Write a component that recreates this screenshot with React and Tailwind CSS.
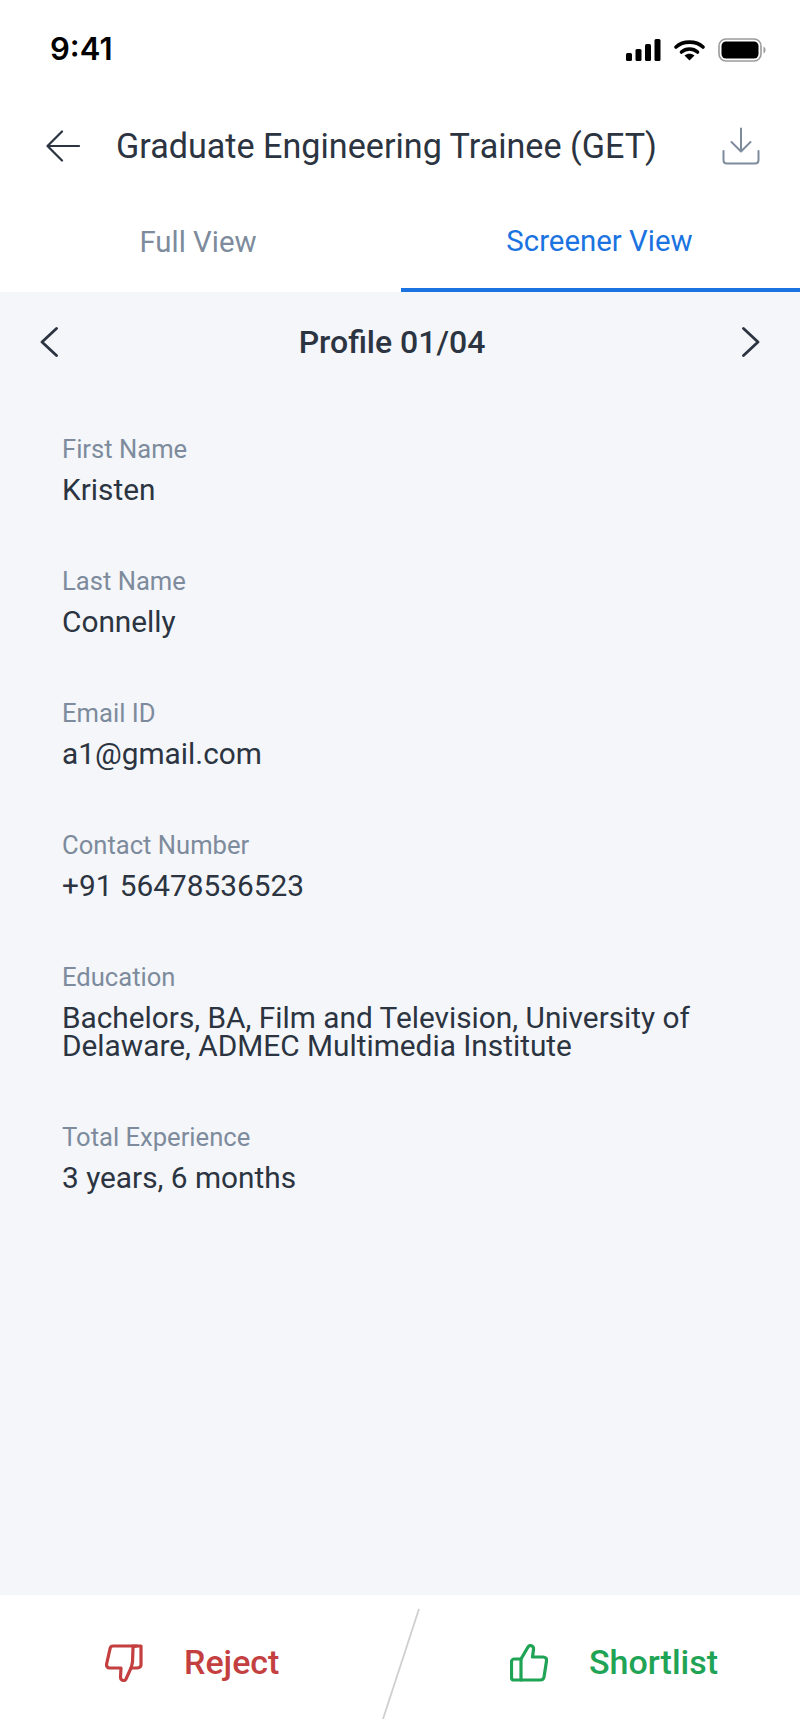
const fields = [
  { label: "First Name", value: "Kristen" },
  { label: "Last Name", value: "Connelly" },
  { label: "Email ID", value: "a1@gmail.com" },
  { label: "Contact Number", value: "+91 56478536523" },
  { label: "Education", value: "Bachelors, BA, Film and Television, University of Delaware, ADMEC Multimedia Institute" },
  { label: "Total Experience", value: "3 years, 6 months" },
];

const StatusIcons = () => (
  <div className="flex items-center gap-[13px]">
    <svg width="35" height="22" viewBox="0 0 35 22" fill="#000">
      <rect x="0" y="14" width="6" height="8" rx="1.5" />
      <rect x="9.5" y="10" width="6" height="12" rx="1.5" />
      <rect x="19" y="5" width="6" height="17" rx="1.5" />
      <rect x="28.5" y="0" width="6" height="22" rx="1.5" />
    </svg>
    <svg width="31" height="22" viewBox="0 0 31 22" fill="none">
      <path d="M2 8 C9 1.5 22 1.5 29 8" stroke="#000" strokeWidth="3.6" strokeLinecap="round" />
      <path d="M7.5 13 C12 9 19 9 23.5 13" stroke="#000" strokeWidth="3.6" strokeLinecap="round" />
      <path d="M10.5 16.5 L15.5 21.5 L20.5 16.5 C17.5 14 13.5 14 10.5 16.5 Z" fill="#000" />
    </svg>
    <svg width="48" height="24" viewBox="0 0 48 24" fill="none">
      <rect x="1" y="1" width="42" height="22" rx="7" stroke="#9a9a9a" strokeWidth="1.6" />
      <rect x="3.5" y="3.5" width="37" height="17" rx="4.5" fill="#000" />
      <path d="M45.5 8.5 C47 9.5 47.5 10.5 47.5 12 C47.5 13.5 47 14.5 45.5 15.5 Z" fill="#9a9a9a" />
    </svg>
  </div>
);

const App = () => {
  return (
    <div className="flex h-[1732px] w-[800px] flex-col overflow-hidden bg-[#f4f6fa] font-['Roboto',sans-serif]">
      <div className="bg-white">
        <div className="flex h-[100px] items-start justify-between pl-[50px] pr-[34px] pt-[32px]">
          <span className="font-['Inter',sans-serif] text-[31px] font-semibold leading-[34px] text-black">9:41</span>
          <div className="pt-[6px]">
            <StatusIcons />
          </div>
        </div>

        <div className="flex h-[94px] items-center pb-[2px] pl-[46px] pr-[40px]">
          <svg width="34" height="32" viewBox="0 0 34 32" fill="none" stroke="#2b3440" strokeWidth="2.2" strokeLinecap="round" strokeLinejoin="round">
            <path d="M33 16 H1.5 M16 1.5 L1.5 16 L16 30.5" />
          </svg>
          <h1 className="ml-[36px] flex-1 whitespace-nowrap text-[34.15px] font-normal leading-[40px] text-[#2b3440]">
            Graduate Engineering Trainee (GET)
          </h1>
          <svg width="38" height="38" viewBox="0 0 38 38" fill="none" stroke="#7d8b9c" strokeWidth="2" strokeLinecap="round" strokeLinejoin="round">
            <path d="M19 1.5 V24 M9.5 15 L19 24.5 L28.5 15" />
            <path d="M1.5 24 V33 C1.5 35 3 36.5 5 36.5 H33 C35 36.5 36.5 35 36.5 33 V24" />
          </svg>
        </div>

        <div className="flex h-[98px]">
          <div className="flex w-[401px] items-center justify-center pb-[2px] pr-[5px] text-[29.4px] text-[#7d8b9c]">Full View</div>
          <div className="flex flex-1 items-center justify-center border-b-[4px] border-[#1a73e0] pr-[2px] text-[29.4px] text-[#1a73e0]">
            Screener View
          </div>
        </div>
      </div>

      <div className="flex-1">
        <div className="flex h-[100px] items-center justify-between pl-[40px] pr-[40px]">
          <svg width="18" height="30" viewBox="0 0 18 30" fill="none" stroke="#2b3440" strokeWidth="2.8" strokeLinecap="round" strokeLinejoin="round">
            <path d="M16.5 1.5 L2 15 L16.5 28.5" />
          </svg>
          <span className="pr-[16px] text-[32px] font-medium text-[#2b3440]">Profile 01/04</span>
          <svg width="18" height="30" viewBox="0 0 18 30" fill="none" stroke="#2b3440" strokeWidth="2.8" strokeLinecap="round" strokeLinejoin="round">
            <path d="M1.5 1.5 L16 15 L1.5 28.5" />
          </svg>
        </div>

        <div className="flex flex-col gap-[56.3px] pl-[62px] pr-[60px] pt-[36.5px]">
          {fields.map((field) => (
            <div key={field.label}>
              <div className="text-[25.6px] leading-[40px] text-[#7d8b9c]">{field.label}</div>
              <div className="pt-[7px] text-[29.8px] leading-[28.7px] text-[#2b3440]">{field.value}</div>
            </div>
          ))}
        </div>
      </div>

      <div className="flex h-[137px] items-center bg-white">
        <div className="flex w-[382px] items-center gap-[41px] pb-[2px] pl-[105px]">
          <svg width="38" height="38" viewBox="0 0 38 38" fill="none" stroke="#c43f3f" strokeWidth="3.2" strokeLinecap="round" strokeLinejoin="round">
            <path d="M32 2 H8 C6.5 2 5.6 2.8 5.2 4 L1.6 20 C1.2 22 2.4 24 4.5 24 H16 L15.5 33 C15.5 37 20 37.5 21 35 L26 24 C26.6 23 27 20 27.5 18 L28 4 C28 3 29.5 2 32 2 Z" />
            <path d="M27.5 2 H36 V21 C36 23 34 24 32 24 H26" />
          </svg>
          <span className="text-[34px] font-medium text-[#c43f3f]">Reject</span>
        </div>
        <svg width="38" height="112" viewBox="0 0 38 112" fill="none" stroke="#cfcfcf" strokeWidth="1.8" className="shrink-0">
          <path d="M37 1 L1 111" />
        </svg>
        <div className="flex flex-1 items-center gap-[41px] pb-[2px] pl-[90px]">
          <svg width="38" height="38" viewBox="0 0 38 38" fill="none" stroke="#1fa355" strokeWidth="3.2" strokeLinecap="round" strokeLinejoin="round">
            <path d="M11 36 V15 L18 3 C19.5 0.5 24 1.5 23.5 5.5 L22.5 13 H33 C35.5 13 37 14.5 36.5 17 L34 33 C33.6 35 32.5 36 30.5 36 Z" />
            <path d="M11 36 H4 C2.5 36 1.5 35 1.5 33.5 V18 C1.5 16.5 2.5 15 4 15 H11" />
          </svg>
          <span className="text-[34px] font-medium text-[#1fa355]">Shortlist</span>
        </div>
      </div>
    </div>
  );
};

export default App;
